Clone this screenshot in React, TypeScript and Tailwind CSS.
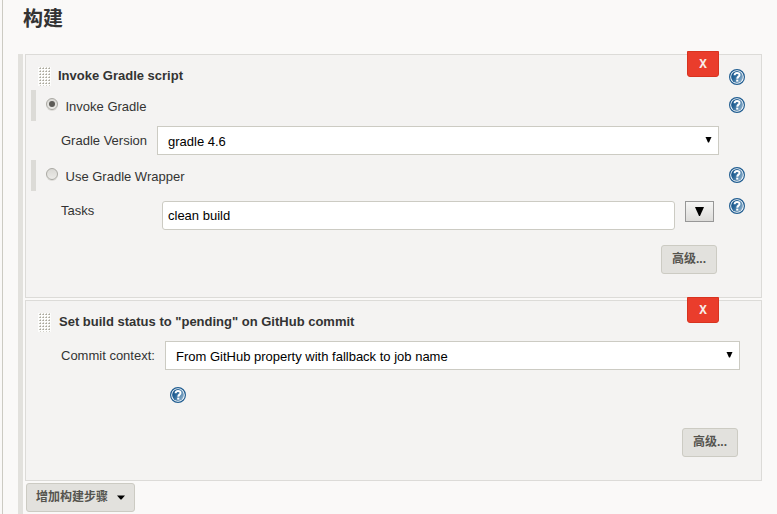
import type { ReactNode } from "react";

function HelpIcon() {
  return (
    <svg width="16" height="16" viewBox="0 0 16 16" className="block shrink-0" aria-label="Help">
      <defs>
        <linearGradient id="help" x1="0" y1="0" x2="1" y2="0.6">
          <stop offset="0" stopColor="#0b4a82" />
          <stop offset="0.45" stopColor="#2a6799" />
          <stop offset="1" stopColor="#86abc9" />
        </linearGradient>
      </defs>
      <circle cx="8" cy="8" r="7.4" fill="#fff" stroke="#1f5c90" strokeWidth="1.2" />
      <circle cx="8" cy="8" r="5.9" fill="url(#help)" />
      <path d="M5.6 6.2C5.6 3.2 10.5 3.2 10.5 5.9C10.5 7.7 8.3 7.6 8.3 9.7" fill="none" stroke="#fff" strokeWidth="2" />
      <rect x="7.2" y="10.6" width="2.1" height="2" fill="#fff" />
    </svg>
  );
}

function DragHandle() {
  return (
    <svg width="13" height="19" viewBox="0 0 13 19" className="block shrink-0">
      <defs>
        <pattern id="grip" width="3" height="3" patternUnits="userSpaceOnUse">
          <rect width="3" height="3" fill="#fdfdfc" />
          <rect x="1" y="1" width="1" height="1" fill="#c4c2b8" />
          <rect x="2" y="1" width="1" height="1" fill="#a8a69b" />
          <rect x="2" y="0" width="1" height="1" fill="#d2d0c8" />
        </pattern>
      </defs>
      <rect width="13" height="19" fill="url(#grip)" />
    </svg>
  );
}

function Radio({ checked = false }: { checked?: boolean }) {
  return (
    <span className="mt-2 ml-2.5 flex size-3 shrink-0 items-center justify-center rounded-full border border-[#aaa9a3] bg-linear-to-b from-[#d9d8d4] to-[#ecebe8] shadow-[0_1px_0_#dddcd8]">
      {checked && <span className="size-1.5 rounded-full bg-[#5c5b57]" />}
    </span>
  );
}

function DeleteButton() {
  return (
    <button className="absolute -top-1 right-[42px] flex h-[26px] w-8 items-center justify-center rounded-b-[3px] border border-[#d8331f] bg-[#ea3d2c] font-['Noto_Sans',sans-serif] text-[12px] leading-6 font-bold text-[#f8eeea]">
      <span className="scale-x-95">X</span>
    </button>
  );
}

function RadioRow({ label, checked }: { label: string; checked?: boolean }) {
  return (
    <div className="ml-[5px] flex h-[31px] border-l-[5px] border-[#dcdbd7]">
      <Radio checked={checked} />
      <span className="ml-[7.5px] flex-1 pt-[7px]">{label}</span>
      <div className="mr-4 pt-[7px]">
        <HelpIcon />
      </div>
    </div>
  );
}

function Select({ children, className }: { children: ReactNode; className: string }) {
  return (
    <div className={`flex h-[29px] justify-between border border-[#cccbc3] bg-white pr-[6px] pl-2.5 text-black ${className}`}>
      <span className="pt-[5px]">{children}</span>
      <svg width="7" height="7" viewBox="0 0 7 7" className="mt-[9px]">
        <path d="M0.5 1H6.5L4 6.5H3Z" fill="#000" />
      </svg>
    </div>
  );
}

function GreyButton({ children, className = "" }: { children: ReactNode; className?: string }) {
  return (
    <button className={`flex h-[29px] items-center rounded-[3px] border border-[#cccbc3] bg-[#e2e1dd] pb-px text-[12px] font-bold text-[#55544f] ${className}`}>
      {children}
    </button>
  );
}

export default function App() {
  return (
    <div className="h-[514px] w-[777px] overflow-hidden bg-[#faf9f8] pl-[2px] font-['Liberation_Sans','Noto_Sans_CJK_SC',sans-serif] text-[13px] leading-5 text-[#333]">
      <div className="h-full border-l border-[#cccbc3]">
        <h1 className="h-[54px] pt-1 pl-5 font-['Noto_Sans_CJK_SC',sans-serif] text-[20px] leading-7 font-bold text-[#333]">构建</h1>
        <main className="ml-[15px] h-[460px] border-l-[5px] border-[#e2e1dd] pl-[2px]">
          <section className="relative h-[244px] w-[737px] border border-[#dcdbd8] bg-[#f4f3f2]">
            <DeleteButton />
            <div className="flex h-[35px] pl-3">
              <div className="pt-3">
                <DragHandle />
              </div>
              <strong className="ml-[7px] flex-1 pt-[11px]">Invoke Gradle script</strong>
              <div className="mr-4 pt-[14px]">
                <HelpIcon />
              </div>
            </div>
            <RadioRow label="Invoke Gradle" checked />
            <div className="flex h-[39px] pt-[5px] pl-[35px]">
              <label className="w-24 pt-[5px]">Gradle Version</label>
              <Select className="w-[562px]">gradle 4.6</Select>
            </div>
            <RadioRow label="Use Gradle Wrapper" />
            <div className="flex h-[54px] pt-[10px] pl-[35px]">
              <label className="w-[101px]">Tasks</label>
              <div className="h-[29px] w-[513px] rounded-[3px] border border-[#cccbc3] bg-white pt-1 pl-[5px] text-black">clean build</div>
              <button className="ml-2.5 flex h-[21px] w-[29px] items-center justify-center border border-[#979797] bg-linear-to-b from-[#f6f6f5] to-[#dddcda]">
                <svg width="9" height="9" viewBox="0 0 9 9">
                  <path d="M0 0H9L5 9H4Z" fill="#000" />
                </svg>
              </button>
              <div className="-mt-[3px] ml-[15px]">
                <HelpIcon />
              </div>
            </div>
            <div className="flex justify-end pr-11">
              <GreyButton className="w-14 justify-center">高级...</GreyButton>
            </div>
          </section>
          <section className="relative mt-[2px] h-[181px] w-[737px] border border-[#dcdbd8] bg-[#f4f3f2]">
            <DeleteButton />
            <div className="flex h-10 pl-3">
              <div className="pt-3">
                <DragHandle />
              </div>
              <strong className="ml-2 pt-[11px]">Set build status to "pending" on GitHub commit</strong>
            </div>
            <div className="flex pl-[35px]">
              <label className="w-[104px] pt-[5px]">Commit context:</label>
              <Select className="w-[575px]">From GitHub property with fallback to job name</Select>
            </div>
            <div className="h-[58px] pt-[17px] pl-36">
              <HelpIcon />
            </div>
            <div className="flex justify-end pr-[23px]">
              <GreyButton className="w-14 justify-center">高级...</GreyButton>
            </div>
          </section>
          <GreyButton className="mt-[2px] ml-px w-[109px] pl-[9px]">
            增加构建步骤
            <svg width="8" height="5" viewBox="0 0 8 5" className="mt-px ml-[9px]">
              <path d="M0 0.5H8L4.5 4.5H3.5Z" fill="#000" />
            </svg>
          </GreyButton>
        </main>
      </div>
    </div>
  );
}
